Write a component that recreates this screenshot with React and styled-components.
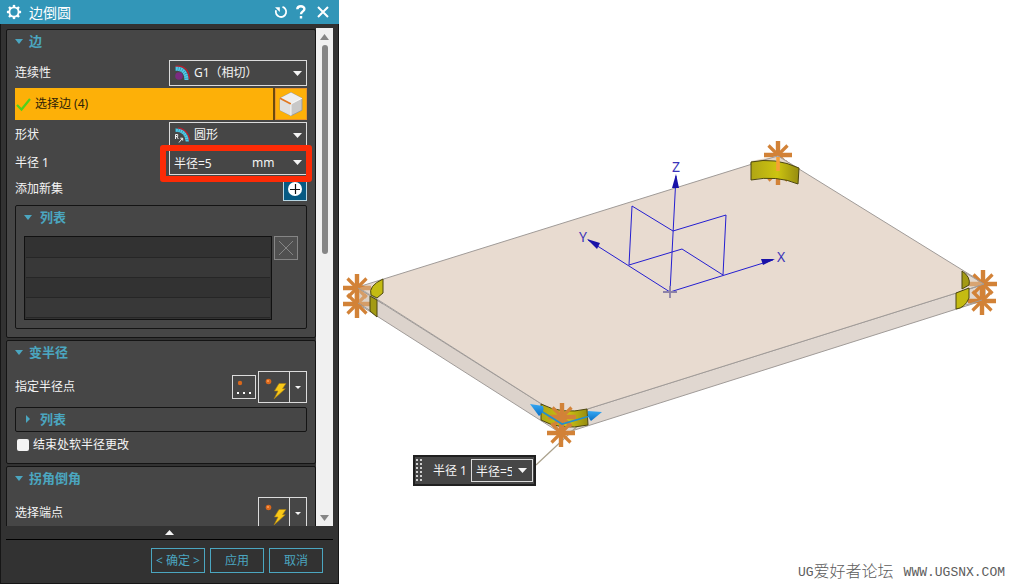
import React from "react";
import styled, { createGlobalStyle } from "styled-components";

const GlobalStyle = createGlobalStyle`
  *, *::before, *::after { box-sizing: border-box; }
  body {
    margin: 0;
    background: #fff;
    font-family: "Noto Sans", "Noto Sans CJK SC", sans-serif;
    font-size: 12px;
    line-height: 16px;
  }
  button, input, select { font: inherit; color: inherit; margin: 0; }
  button { cursor: pointer; }
`;

const Workspace = styled.div`
  display: flex;
  height: 100vh;
`;

const Dialog = styled.section`
  flex: 0 0 339px;
  display: flex;
  flex-direction: column;
  min-height: 0;
  background: #323232;
  color: #f4f4f4;
`;

const TitleBar = styled.header`
  flex: none;
  display: flex;
  align-items: center;
  height: 24px;
  padding: 0 4px 0 6px;
  background: #3296b8;
  color: #fff;
`;

const DialogTitle = styled.h1`
  flex: 1;
  margin: 0 0 0 7px;
  padding-top: 1px;
  font-size: 14px;
  line-height: 23px;
  font-weight: 400;
`;

const TitleButton = styled.button`
  display: flex;
  justify-content: center;
  align-items: center;
  width: ${(p) => p.$width || 20}px;
  height: 20px;
  padding: 0;
  border: 0;
  background: none;
`;

const DialogBody = styled.div`
  flex: 1;
  min-height: 0;
  display: flex;
  flex-direction: column;
  padding: 4px 5px 0;
  border: 1px solid #161616;
  border-top: 0;
`;

const ScrollArea = styled.div`
  flex: 1;
  min-height: 0;
  display: flex;
`;

const GroupList = styled.div`
  flex: 1;
  min-width: 0;
  overflow: hidden;
  display: flex;
  flex-direction: column;
  gap: 2px;
  padding-top: 1px;
  > * { flex: none; }
`;

const Group = styled.section`
  padding: 0 8px 8px;
  border: 1px solid #141414;
  border-radius: 2px;
  background: #464646;
`;

const ScrollTrack = styled.div`
  flex: 0 0 17px;
  display: flex;
  flex-direction: column;
  align-items: center;
  background: #f0f0f0;
`;

const ScrollButton = styled.button`
  flex: none;
  display: flex;
  justify-content: center;
  align-items: center;
  width: 17px;
  height: 17px;
  padding: 0;
  border: 0;
  background: none;
  color: #858585;
`;

const ScrollLane = styled.div`
  flex: 1;
  width: 6px;
`;

const ScrollThumb = styled.div`
  width: 6px;
  height: 45%;
  border-radius: 3px;
  background: #858585;
`;

const SectionToggle = styled.button`
  display: flex;
  align-items: center;
  gap: ${(p) => (p.$nested ? 8 : 6)}px;
  width: 100%;
  height: ${(p) => (p.$closed ? 23 : 24)}px;
  padding: 0 0 2px;
  border: 0;
  background: none;
  color: #4ba6c0;
  font-size: 13px;
  font-weight: 700;
  text-align: left;
`;

const Fields = styled.div`
  display: flex;
  flex-direction: column;
  gap: 2px;
  margin-top: 6px;
`;

const Field = styled.div`
  position: relative;
  display: flex;
  align-items: center;
  justify-content: space-between;
  height: ${(p) => p.$height || 26}px;
`;

const ControlBox = styled.div`
  position: relative;
  flex: 0 0 138px;
  align-self: stretch;
  display: flex;
  align-items: center;
  padding-left: 4px;
  border: 1px solid #dcdcdc;
`;

const Select = styled.select`
  flex: 1;
  min-width: 0;
  height: 100%;
  padding: 0 14px 0 ${(p) => p.$indent || 0}px;
  appearance: none;
  border: 0;
  outline: 0;
  background: transparent;
  option { color: #222; }
`;

const SelectArrow = styled.span`
  position: absolute;
  right: 4px;
  top: 0;
  bottom: 0;
  display: flex;
  align-items: center;
  pointer-events: none;
`;

const ValueInput = styled.input`
  width: ${(p) => p.$width}px;
  height: 100%;
  padding: 0;
  border: 0;
  outline: 0;
  background: transparent;
`;

const HighlightFrame = styled.div`
  position: absolute;
  inset: -5px -5px -7px auto;
  width: 152px;
  border: 6px solid #fd2b06;
  border-radius: 3px;
  pointer-events: none;
  z-index: 1;
`;

const SelectionRow = styled.div`
  display: flex;
  gap: 2px;
  height: 32px;
  background: #6b4a0c;
`;

const SelectionButton = styled.button`
  flex: 1;
  display: flex;
  align-items: center;
  gap: 4px;
  padding: 0 1px;
  border: 0;
  background: #fdb008;
  color: #2c2108;
`;

const CubeButton = styled.button`
  flex: 0 0 32px;
  display: flex;
  justify-content: center;
  align-items: center;
  padding: 0;
  border: 1px solid #e8922a;
  background: #fdb008;
`;

const AddButton = styled.button`
  display: flex;
  justify-content: center;
  align-items: center;
  width: 24px;
  height: 24px;
  padding: 0;
  border: 1px solid #b9d7e4;
  background: #075a83;
`;

const ListBox = styled.div`
  margin-top: 4px;
  padding: 0 8px ${(p) => (p.$closed ? 0 : 8)}px;
  border: 1px solid #141414;
  border-radius: 2px;
`;

const ListArea = styled.div`
  display: flex;
  align-items: flex-start;
  gap: 2px;
  margin-top: 6px;
`;

const SetList = styled.ul`
  flex: 1;
  margin: 0;
  padding: 1px;
  border: 1px solid #111;
  background: #323232;
  list-style: none;
`;

const SetItem = styled.li`
  height: 20px;
  border-bottom: 1px solid #262626;
  &:nth-child(even) { background: #383838; }
`;

const IconButton = styled.button`
  display: flex;
  justify-content: center;
  align-items: center;
  width: 24px;
  height: 24px;
  padding: 0;
  border: 1px solid ${(p) => (p.disabled ? "#858585" : "#dcdcdc")};
  background: ${(p) => (p.disabled ? "#505050" : "transparent")};
`;

const PointTools = styled.div`
  display: flex;
  align-items: center;
  gap: 2px;
`;

const SplitButton = styled.div`
  display: flex;
  height: 32px;
  border: 1px solid #dcdcdc;
`;

const SplitPart = styled.button`
  display: flex;
  justify-content: center;
  align-items: center;
  width: ${(p) => p.$width}px;
  padding: 0;
  border: 0;
  background: none;
  & + & { border-left: 1px solid #dcdcdc; }
`;

const CheckLabel = styled.label`
  display: flex;
  align-items: center;
  gap: 4px;
  height: 21px;
  margin-top: 2px;
  padding-left: 2px;
`;

const CheckBox = styled.input`
  appearance: none;
  width: 12px;
  height: 12px;
  border-radius: 2px;
  background: #f4f4f4;
  &:checked { background: #4ba6c0; }
`;

const CollapseButton = styled.button`
  flex: none;
  display: flex;
  justify-content: center;
  align-items: center;
  height: 13px;
  padding: 0;
  border: 0;
  background: none;
`;

const Footer = styled.footer`
  flex: none;
  display: flex;
  justify-content: flex-end;
  gap: 5px;
  padding: 8px 10px 10px;
  border-top: 1px solid #000;
`;

const ActionButton = styled.button`
  width: 54px;
  height: 25px;
  padding: 0;
  border: 1px solid #4ba6c0;
  background: none;
  color: #4ba6c0;
  white-space: nowrap;
`;

const Viewport = styled.main`
  position: relative;
  flex: 1;
  min-width: 0;
  overflow: hidden;
  background: #fff;
`;

const Scene = styled.svg`
  display: block;
  width: 100%;
  height: 100%;
`;

const FloatingBar = styled.div`
  position: absolute;
  left: 74px;
  top: 455px;
  display: flex;
  align-items: center;
  height: 31px;
  padding: 0 2px 0 1px;
  border: 1px solid #202020;
  outline: 1px solid #202020;
  outline-offset: -2px;
  background: #464646;
  color: #f4f4f4;
`;

const FloatingLabel = styled.label`
  width: 38px;
  margin-left: 10px;
  white-space: nowrap;
`;

const FloatingField = styled.div`
  display: flex;
  align-items: center;
  width: 62px;
  height: 23px;
  padding-left: 4px;
  border: 1px solid #dcdcdc;
`;

const DropButton = styled.button`
  flex: 1;
  display: flex;
  justify-content: center;
  padding: 0;
  border: 0;
  background: none;
`;

const Watermark = styled.div`
  position: absolute;
  right: 5px;
  bottom: 2px;
  display: flex;
  align-items: center;
  font-family: "Liberation Mono", "Noto Sans CJK SC", monospace;
  font-size: 13px;
  line-height: 18px;
  color: #5c5c5c;
`;

const WatermarkName = styled.span`
  margin-right: 10px;
  font-size: 16px;
  font-weight: 300;
`;

function Triangle({ dir = "down", w = 9, h = 5 }) {
  const shapes = {
    down: `0,0 ${w},0 ${w / 2},${h}`,
    up: `0,${h} ${w},${h} ${w / 2},0`,
    right: `2,0 ${w - 2},${h / 2} 2,${h}`,
  };
  return (
    <svg width={w} height={h} viewBox={`0 0 ${w} ${h}`} aria-hidden="true">
      <polygon points={shapes[dir]} fill="currentColor" />
    </svg>
  );
}

function GearIcon() {
  return (
    <svg width="16" height="16" viewBox="0 0 16 16" fill="none" stroke="#fff">
      <circle cx="8" cy="8" r="4.6" strokeWidth="1.9" />
      {[0, 45, 90, 135, 180, 225, 270, 315].map((a) => (
        <path key={a} d="M8 .9v2.2" strokeWidth="2.4" transform={`rotate(${a} 8 8)`} />
      ))}
    </svg>
  );
}

function BlendIcon({ kind }) {
  return (
    <svg width="17" height="17" viewBox="0 0 17 17" fill="none">
      {kind === "g1" ? (
        <>
          <circle cx="5" cy="11" r="3.8" fill="#7a2b80" />
          <path d="M1.5 1.2h3C11 1.5 15.2 6 15.2 14" stroke="#b8202e" strokeWidth="1.4" />
          <path d="M1.5 3.7h2C9 4 12.5 8 12.5 15" stroke="#53c9e6" strokeWidth="4" />
          <path d="M1.5 3.7h2C9 4 12.5 8 12.5 15" stroke="#237f98" strokeWidth="4" strokeDasharray=".5 1.8" />
        </>
      ) : (
        <>
          <path d="M4 1.2C10 1.5 15 6.500 15.500 13.500" stroke="#b8202e" strokeWidth="1.4" />
          <path d="M1.500 3.200C8 3.200 12.800 7 13.300 14.500" stroke="#53c9e6" strokeWidth="3.2" />
          <path d="M1.500 3.200C8 3.200 12.800 7 13.300 14.500" stroke="#237f98" strokeWidth="3.2" strokeDasharray=".5 1.8" />
          <path d="M1.5 12V7.500h2.200v2H1.500M2.700 9.500l1.600 2.500M5 15.500l3.400-4.200M6.300 11.200h2.400v2.400" stroke="#eee" strokeWidth="1" />
        </>
      )}
    </svg>
  );
}

function CubeIcon() {
  return (
    <svg width="26" height="26" viewBox="0 0 26 26">
      <path d="M13 1.5 24 7.2v12L13 24.8 2 19.2v-12z" fill="#c8c8c8" stroke="#989898" strokeWidth=".9" />
      <path d="M13 1.5 24 7.2 13 13 2 7.2z" fill="#eeeeee" />
      <path d="M2 7.2 13 13v11.8L2 19.2z" fill="#e0e0e0" />
      <path d="m2 7.2 11 5.8" stroke="#e17822" strokeWidth="1.8" />
      <path d="m13 13 11-5.8M13 13v11.5" stroke="#fff" strokeWidth=".8" />
    </svg>
  );
}

function BoltIcon() {
  return (
    <svg width="30" height="30" viewBox="0 0 30 30">
      <circle cx="9.5" cy="9.5" r="2.8" fill="#d9681c" />
      <circle cx="9" cy="9" r="1.1" fill="#ff9c54" />
      <path d="M20 11.5h7l-3.500 5.200h2.800L15 27l4-8h-3.600z" fill="#f8c817" stroke="#a87d10" strokeWidth=".6" />
    </svg>
  );
}

function DotsIcon() {
  return (
    <svg width="22" height="22" viewBox="0 0 22 22">
      <circle cx="7" cy="7" r="2.2" fill="#d9681c" />
      <path d="M4 16h2v2H4zM10 16h2v2h-2zM16 16h2v2h-2z" fill="#fff" />
    </svg>
  );
}

function PointSplitButton({ label }) {
  return (
    <SplitButton>
      <SplitPart $width={30} aria-label={label}><BoltIcon /></SplitPart>
      <SplitPart $width={17} aria-label={`${label}选项`}><Triangle w={6} h={3} /></SplitPart>
    </SplitButton>
  );
}

function Star({ x, y }) {
  return (
    <g transform={`translate(${x} ${y})`} stroke="#d28237" fill="none">
      <path d="M-14 0H14M0-14V14" strokeWidth="4.4" />
      <path d="M-9.500-9.500 9.500 9.500M9.500-9.500-9.500 9.500" strokeWidth="3.2" />
    </g>
  );
}

function ModelScene() {
  return (
    <Scene viewBox="339 0 671 584" preserveAspectRatio="xMidYMid meet" role="img" aria-label="边倒圆模型">
      <defs>
        <linearGradient id="blend" x1="0" x2="1">
          <stop offset="0" stopColor="#b0a614" />
          <stop offset=".55" stopColor="#cdc410" />
          <stop offset="1" stopColor="#968c10" />
        </linearGradient>
        <linearGradient id="cone" x1="0" x2="0" y1="0" y2="1">
          <stop offset="0" stopColor="#35a8f4" />
          <stop offset="1" stopColor="#0b70c4" />
        </linearGradient>
      </defs>
      <g stroke="#a09b98" strokeWidth="1" strokeLinejoin="round">
        <path d="M358 288 562 417V434L358 304z" fill="#dcd3cc" />
        <path d="M562 417 985 284V300L562 434z" fill="#e0d7d0" />
        <path d="M358 287 778 156 985 284 562 417z" fill="#e8dbd0" />
      </g>

      <Star x={778} y={155} />
      <Star x={778} y={171} />
      <path d="M751 161 778 156 799 168V171L751 171z" fill="#e4d6c8" />
      <path d="M750 164 778 156 799 169" fill="none" stroke="#a09b98" />
      <path d="M751 162Q775 157 799 168L798 184Q777 175 751 180z" fill="url(#blend)" stroke="#4d470f" />
      <path d="M778 157V171" stroke="#f6a035" strokeWidth="3.6" />

      <Star x={357} y={288} />
      <Star x={357} y={304} />
      <path d="M359 288 372 284V311L359 303z" fill="#ddd0c3" fillOpacity=".35" />
      <path d="M358 288 383 304M358 303 371 311" fill="none" stroke="#a09b98" />
      <g stroke="#4d470f" strokeWidth="1">
        <path d="M383 279V293L377 298 371 295Q368 286 383 279z" fill="#c4bb12" />
        <path d="M370 296 377 300V317L370 311z" fill="#a39a14" />
      </g>

      <Star x={983} y={284} />
      <Star x={982} y={301} />
      <path d="M964 272 984 284 969 289" fill="#e2d6ca" fillOpacity=".4" stroke="#a09b98" />
      <path d="M966 305 982 300" fill="none" stroke="#a09b98" />
      <g stroke="#4d470f" strokeWidth="1">
        <path d="M962 271Q971 277 969 285L962 289z" fill="#a39a14" />
        <path d="M956 293 969 288V298Q965 308 956 309z" fill="#c4bb12" />
      </g>

      <path d="M585 419 536 465" stroke="#aaa18c" strokeWidth="1.2" />
      <path d="M541 404Q562 415 587 409L588 425Q560 431 541 420z" fill="url(#blend)" stroke="#4d470f" />
      <Star x={562} y={417} />
      <Star x={561} y={433} />
      <path d="M541 411 562 424 590 416" fill="none" stroke="#258fca" strokeWidth="1.8" />
      <path d="M530 404 543 406Q545 411 539 416z" fill="url(#cone)" />
      <path d="M602 412 588 411Q587 416 591 421z" fill="url(#cone)" />

      <g stroke="#241ed0" strokeWidth="1" fill="none">
        <path d="M670 292 588 240M670 292 773 260M670 292 676 176" />
        <path d="M629 265 632 206 673 231 726 215 723 275 682 249z" />
      </g>
      <path d="M663 292H677M670 286V298" stroke="#8c82a8" strokeWidth="1.8" />
      <g fill="#1912a8">
        <path d="M676 174 679 188H672z" />
        <path d="M587 239 600 243 597 249z" />
        <path d="M775 259 761 259 763 265z" />
      </g>
      <g fill="#3b35b9" fontFamily="Noto Sans, sans-serif" fontSize="14" textAnchor="middle">
        <text x="676" y="172">Z</text>
        <text x="583" y="242">Y</text>
        <text x="781" y="262">X</text>
      </g>
    </Scene>
  );
}

export default function App() {
  return (
    <>
      <GlobalStyle />
      <Workspace>
        <Dialog aria-label="边倒圆">
          <TitleBar>
            <GearIcon />
            <DialogTitle>边倒圆</DialogTitle>
            <TitleButton aria-label="重置">
              <svg width="14" height="14" viewBox="0 0 14 14" fill="none" stroke="#fff" strokeWidth="1.8">
                <path d="M8.5 1.800A5.200 5.200 0 1 1 2 5.300" />
                <path d="M1 2.200h4.800V7z" fill="#fff" stroke="none" />
              </svg>
            </TitleButton>
            <TitleButton aria-label="帮助">
              <svg width="10" height="14" viewBox="0 0 10 14" fill="none" stroke="#fff" strokeWidth="2.4">
                <path d="M1.300 4.300C1.500.2 8.400.4 8.400 4 8.400 6.500 5 6.300 5 9.200M5 11v2.400" />
              </svg>
            </TitleButton>
            <TitleButton $width={24} aria-label="关闭">
              <svg width="12" height="12" viewBox="0 0 12 12" stroke="#fff" strokeWidth="2">
                <path d="m1 1 10 10M11 1 1 11" />
              </svg>
            </TitleButton>
          </TitleBar>

          <DialogBody>
            <ScrollArea>
              <GroupList>
                <Group>
                  <SectionToggle aria-expanded="true"><Triangle w={8} />边</SectionToggle>
                  <Fields>
                    <Field>
                      <label htmlFor="continuity">连续性</label>
                      <ControlBox>
                        <BlendIcon kind="g1" />
                        <Select id="continuity" $indent={3}><option>G1（相切）</option></Select>
                        <SelectArrow><Triangle /></SelectArrow>
                      </ControlBox>
                    </Field>
                    <SelectionRow>
                      <SelectionButton>
                        <svg width="15" height="16" viewBox="0 0 15 16" fill="none" stroke="#4fd21c" strokeWidth="2.2">
                          <path d="m1 9 4.500 4.500L14 3" />
                        </svg>
                        选择边 (4)
                      </SelectionButton>
                      <CubeButton aria-label="曲线规则"><CubeIcon /></CubeButton>
                    </SelectionRow>
                    <Field>
                      <label htmlFor="shape">形状</label>
                      <ControlBox>
                        <BlendIcon kind="round" />
                        <Select id="shape" $indent={3}><option>圆形</option></Select>
                        <SelectArrow><Triangle /></SelectArrow>
                      </ControlBox>
                    </Field>
                    <Field $height={25}>
                      <label htmlFor="radius">半径 1</label>
                      <ControlBox>
                        <ValueInput id="radius" $width={78} defaultValue="半径=5" />
                        <Select aria-label="单位"><option>mm</option></Select>
                        <SelectArrow><Triangle /></SelectArrow>
                      </ControlBox>
                      <HighlightFrame />
                    </Field>
                    <Field $height={24}>
                      <span>添加新集</span>
                      <AddButton aria-label="添加新集">
                        <svg width="16" height="16" viewBox="0 0 16 16">
                          <circle cx="8" cy="8" r="7" fill="#fff" />
                          <path d="M3 8.500h10M8.500 3v10" stroke="#111" strokeWidth="1.2" />
                        </svg>
                      </AddButton>
                    </Field>
                  </Fields>
                  <ListBox>
                    <SectionToggle $nested aria-expanded="true"><Triangle w={8} />列表</SectionToggle>
                    <ListArea>
                      <SetList aria-label="列表">
                        <SetItem /><SetItem /><SetItem /><SetItem />
                      </SetList>
                      <IconButton disabled aria-label="移除">
                        <svg width="16" height="16" viewBox="0 0 16 16" stroke="#858585" strokeWidth="1">
                          <path d="m1 1 14 14M15 1 1 15" />
                        </svg>
                      </IconButton>
                    </ListArea>
                  </ListBox>
                </Group>

                <Group>
                  <SectionToggle aria-expanded="true"><Triangle w={8} />变半径</SectionToggle>
                  <Fields>
                    <Field $height={32}>
                      <span>指定半径点</span>
                      <PointTools>
                        <IconButton aria-label="点对话框"><DotsIcon /></IconButton>
                        <PointSplitButton label="指定半径点" />
                      </PointTools>
                    </Field>
                  </Fields>
                  <ListBox $closed>
                    <SectionToggle $nested $closed aria-expanded="false">
                      <Triangle dir="right" w={8} h={8} />列表
                    </SectionToggle>
                  </ListBox>
                  <CheckLabel><CheckBox type="checkbox" />结束处软半径更改</CheckLabel>
                </Group>

                <Group>
                  <SectionToggle aria-expanded="true"><Triangle w={8} />拐角倒角</SectionToggle>
                  <Fields>
                    <Field $height={32}>
                      <span>选择端点</span>
                      <PointSplitButton label="选择端点" />
                    </Field>
                  </Fields>
                </Group>
              </GroupList>
              <ScrollTrack>
                <ScrollButton aria-label="向上滚动"><Triangle dir="up" h={6} /></ScrollButton>
                <ScrollLane><ScrollThumb /></ScrollLane>
                <ScrollButton aria-label="向下滚动"><Triangle h={6} /></ScrollButton>
              </ScrollTrack>
            </ScrollArea>
            <CollapseButton aria-label="收起"><Triangle dir="up" /></CollapseButton>
            <Footer>
              <ActionButton>&lt; 确定 &gt;</ActionButton>
              <ActionButton>应用</ActionButton>
              <ActionButton>取消</ActionButton>
            </Footer>
          </DialogBody>
        </Dialog>

        <Viewport>
          <ModelScene />
          <FloatingBar>
            <svg width="8" height="25" viewBox="0 0 8 25" fill="#d0d0d0">
              {[1, 5, 9, 13, 17, 21].map((y) => (
                <path key={y} d={`M1 ${y}h2v2H1zM5 ${y}h2v2H5z`} />
              ))}
            </svg>
            <FloatingLabel htmlFor="floating-radius">半径 1</FloatingLabel>
            <FloatingField>
              <ValueInput id="floating-radius" $width={36} defaultValue="半径=5" />
              <DropButton aria-label="半径选项"><Triangle /></DropButton>
            </FloatingField>
          </FloatingBar>
          <Watermark>
            <span>UG</span>
            <WatermarkName>爱好者论坛</WatermarkName>
            <span>WWW.UGSNX.COM</span>
          </Watermark>
        </Viewport>
      </Workspace>
    </>
  );
}
